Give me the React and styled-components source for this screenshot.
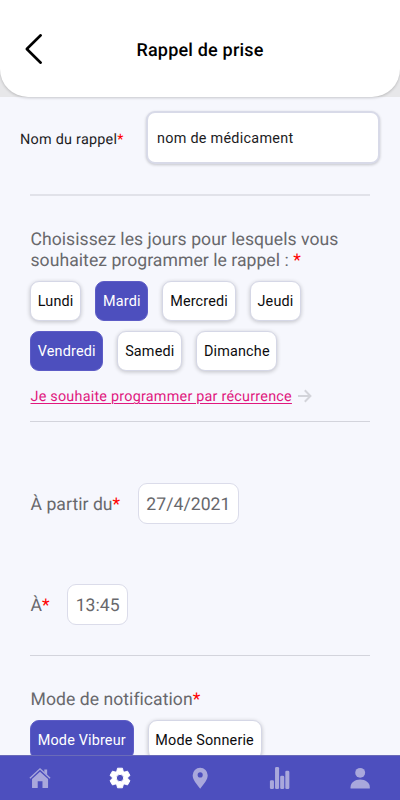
import React, { useState } from 'react';
import styled, { createGlobalStyle } from 'styled-components';

const GlobalStyle = createGlobalStyle`
  * {
    box-sizing: border-box;
  }
  body {
    margin: 0;
    background: #f6f7fd;
    font-family: Roboto, sans-serif;
    text-rendering: geometricPrecision;
  }
  button,
  input {
    font-family: inherit;
  }
  button {
    cursor: pointer;
  }
`;

const Screen = styled.div`
  display: flex;
  flex-direction: column;
  height: 800px;
  overflow: hidden;
  background: #f6f7fd;
`;

const HeaderBack = styled.div`
  flex: none;
  height: 97px;
  background: #e7e7e9;
`;

const Header = styled.header`
  display: grid;
  grid-template-columns: 60px 1fr 60px;
  align-items: center;
  height: 97px;
  background: #fff;
  border-radius: 0 0 28px 28px;
  box-shadow: 0 1px 3px rgba(0, 0, 0, 0.2);
`;

const BackButton = styled.button`
  display: flex;
  padding: 0 0 0 24px;
  border: 0;
  background: none;
`;

const Title = styled.h1`
  margin: 4px 0 0;
  font-size: 18px;
  font-weight: 500;
  line-height: 22px;
  letter-spacing: 0.2px;
  text-align: center;
  color: #000;
`;

const Content = styled.main`
  flex: 1;
  min-height: 0;
  overflow: hidden;
`;

const NameRow = styled.label`
  display: flex;
  align-items: center;
  justify-content: space-between;
  height: 97px;
  padding: 0 20px 16px;
  font-size: 14.4px;
  letter-spacing: 0.25px;
  color: #1c1c1e;
`;

const NameText = styled.span`
  padding-top: 3px;
`;

const NameInput = styled.input`
  width: 234px;
  height: 53px;
  padding: 1px 9px 0;
  border: 2px solid #d8dae8;
  border-radius: 9px;
  background: #fff;
  box-shadow: 0 1px 3px rgba(0, 0, 0, 0.2);
  font-size: 14.4px;
  letter-spacing: 0.27px;
  color: #1c1c1e;
  outline: none;
`;

const Required = styled.span`
  color: #ff0000;
`;

const Section = styled.section`
  height: ${(props) => props.$height}px;
  margin: 0 30px;
  padding-top: ${(props) => props.$top}px;
  border-top: ${(props) => props.$line || 1}px solid ${(props) => (props.$line ? '#e1e2e9' : '#d3d4dc')};
`;

const Label = styled.p`
  margin: 0;
  padding-left: 0.5px;
  font-size: 17.6px;
  line-height: 21px;
  letter-spacing: 0.04px;
  color: #68686c;
`;

const ChipList = styled.div`
  display: flex;
  flex-wrap: wrap;
  gap: 10px 14px;
  margin-top: 9px;
`;

const Chip = styled.button`
  height: 40px;
  padding: 1px 6.75px 0;
  border: 1px solid ${(props) => (props.$active ? '#5d5cc6' : '#d5d7e6')};
  border-radius: 9px;
  background: ${(props) => (props.$active ? '#4d4fbe' : '#fff')};
  box-shadow: ${(props) => (props.$active ? 'none' : '0 1px 4px rgba(0, 0, 0, 0.22)')};
  font-size: 14.4px;
  letter-spacing: 0.17px;
  color: ${(props) => (props.$active ? '#fff' : '#0c0c0e')};
`;

const Recurrence = styled.div`
  display: flex;
  align-items: center;
  gap: 6.5px;
  height: 20px;
  margin-top: 15px;
`;

const RecurrenceLink = styled.a`
  padding: 2px 0 0 0.5px;
  font-size: 14.4px;
  line-height: 20px;
  letter-spacing: 0.22px;
  color: #e0187e;
  text-decoration: underline;
  text-decoration-thickness: 1px;
  text-underline-offset: 2px;
`;

const Field = styled.div`
  display: flex;
  align-items: center;
  gap: 17.5px;
  height: 41px;
  margin-bottom: 60px;

  ${Label} {
    padding-top: 3px;
  }
`;

const Value = styled.span`
  display: flex;
  align-items: center;
  height: 41px;
  padding: 2px 7.5px 0;
  border: 1px solid #dbdcea;
  border-radius: 9px;
  background: #fff;
  font-size: 17.6px;
  letter-spacing: 0.06px;
  color: #68686c;
`;

const TabBar = styled.nav`
  display: grid;
  grid-template-columns: repeat(5, 1fr);
  flex: none;
  height: 45px;
  border-top: 1px solid #6a6bb8;
  background: #4d4fbe;
`;

const Tab = styled.button`
  display: flex;
  align-items: center;
  justify-content: center;
  padding: 0;
  border: 0;
  background: none;
  color: ${(props) => (props.$active ? '#fff' : '#a9a8dc')};
`;

const days = ['Lundi', 'Mardi', 'Mercredi', 'Jeudi', 'Vendredi', 'Samedi', 'Dimanche'];
const modes = ['Mode Vibreur', 'Mode Sonnerie'];

const icons = {
  home: (
    <>
      <path d="M12 5.2 20.8 13v9.3a.7.7 0 0 1-.7.7h-5.4v-7.5H9.5V23H4a.7.7 0 0 1-.7-.7V13Z" />
      <path d="M16.7 2.6h3.1v6l-3.1-2.8Z" />
      <path d="M1 12.2 12 2l11 10.2" fill="none" stroke="currentColor" strokeWidth="1.5" />
    </>
  ),
  settings: (
    <path
      fillRule="evenodd"
      d="M9.3 1.3h5.4l.7 3.2 1.7 1 3.1-1 2.7 4.7-2.4 2.1v1.5l2.4 2.1-2.7 4.7-3.1-1-1.7 1-.7 3.1H9.3l-.7-3.1-1.7-1-3.1 1-2.7-4.7 2.4-2.1v-1.5L1.1 9.2l2.7-4.7 3.1 1 1.7-1ZM12 8a4 4 0 1 0 0 8 4 4 0 0 0 0-8Z"
      stroke="currentColor"
      strokeWidth="1"
      strokeLinejoin="round"
    />
  ),
  pin: (
    <path
      fillRule="evenodd"
      d="M12.2.8a8.2 8.2 0 0 0-8.2 8.3c0 5.3 4.2 9.4 8.2 14.7 4-5.3 8.2-9.4 8.2-14.7A8.2 8.2 0 0 0 12.2.8Zm0 5a2.8 2.8 0 1 1 0 5.6 2.8 2.8 0 0 1 0-5.6Z"
    />
  ),
  stats: (
    <>
      <rect x="1" y="14.5" width="4.4" height="9.5" rx="1.4" />
      <rect x="6.6" y="0" width="4.4" height="24" rx="1.4" />
      <rect x="12.2" y="9.5" width="4.4" height="14.5" rx="1.4" />
      <rect x="17.8" y="4" width="4.4" height="20" rx="1.4" />
    </>
  ),
  user: (
    <>
      <circle cx="12.2" cy="6.4" r="5.4" />
      <path d="M1.7 23.5V22c0-4.7 4.7-8.3 10.5-8.3S22.7 17.3 22.7 22v1.5Z" />
    </>
  ),
};

const App = () => {
  const [selectedDays, setSelectedDays] = useState(['Mardi', 'Vendredi']);
  const [mode, setMode] = useState('Mode Vibreur');
  const [name, setName] = useState('nom de médicament');
  const [tab, setTab] = useState('settings');

  const toggleDay = (day) => {
    setSelectedDays(
      selectedDays.includes(day)
        ? selectedDays.filter((d) => d !== day)
        : [...selectedDays, day]
    );
  };

  return (
    <Screen>
      <GlobalStyle />
      <HeaderBack>
        <Header>
          <BackButton aria-label="Retour">
            <svg width="20" height="32" viewBox="0 0 20 32" fill="none">
              <path
                d="M16.7 2.3 2.8 16l13.9 13.7"
                stroke="#000"
                strokeWidth="2.6"
                strokeLinecap="round"
                strokeLinejoin="round"
              />
            </svg>
          </BackButton>
          <Title>Rappel de prise</Title>
        </Header>
      </HeaderBack>
      <Content>
        <NameRow>
          <NameText>
            Nom du rappel<Required>*</Required>
          </NameText>
          <NameInput value={name} onChange={(e) => setName(e.target.value)} />
        </NameRow>
        <Section $height={227} $top={34} $line={2}>
          <Label>
            Choisissez les jours pour lesquels vous souhaitez programmer le
            rappel : <Required>*</Required>
          </Label>
          <ChipList>
            {days.map((day) => (
              <Chip key={day} $active={selectedDays.includes(day)} onClick={() => toggleDay(day)}>
                {day}
              </Chip>
            ))}
          </ChipList>
          <Recurrence>
            <RecurrenceLink>Je souhaite programmer par récurrence</RecurrenceLink>
            <svg width="14" height="14" viewBox="0 0 14 14" fill="none" stroke="#d3d4da" strokeWidth="2">
              <path d="M0 7h12M6.8 1.3 12.4 7l-5.6 5.7" />
            </svg>
          </Recurrence>
        </Section>
        <Section $height={234} $top={61}>
          <Field>
            <Label>
              À partir du<Required>*</Required>
            </Label>
            <Value>27/4/2021</Value>
          </Field>
          <Field>
            <Label>
              À<Required>*</Required>
            </Label>
            <Value>13:45</Value>
          </Field>
        </Section>
        <Section $height={110} $top={34}>
          <Label>
            Mode de notification<Required>*</Required>
          </Label>
          <ChipList>
            {modes.map((item) => (
              <Chip key={item} $active={mode === item} onClick={() => setMode(item)}>
                {item}
              </Chip>
            ))}
          </ChipList>
        </Section>
      </Content>
      <TabBar>
        {Object.keys(icons).map((key) => (
          <Tab key={key} aria-label={key} $active={tab === key} onClick={() => setTab(key)}>
            <svg width="22" height="22" viewBox="0 0 24 24" fill="currentColor">
              {icons[key]}
            </svg>
          </Tab>
        ))}
      </TabBar>
    </Screen>
  );
};

export default App;
